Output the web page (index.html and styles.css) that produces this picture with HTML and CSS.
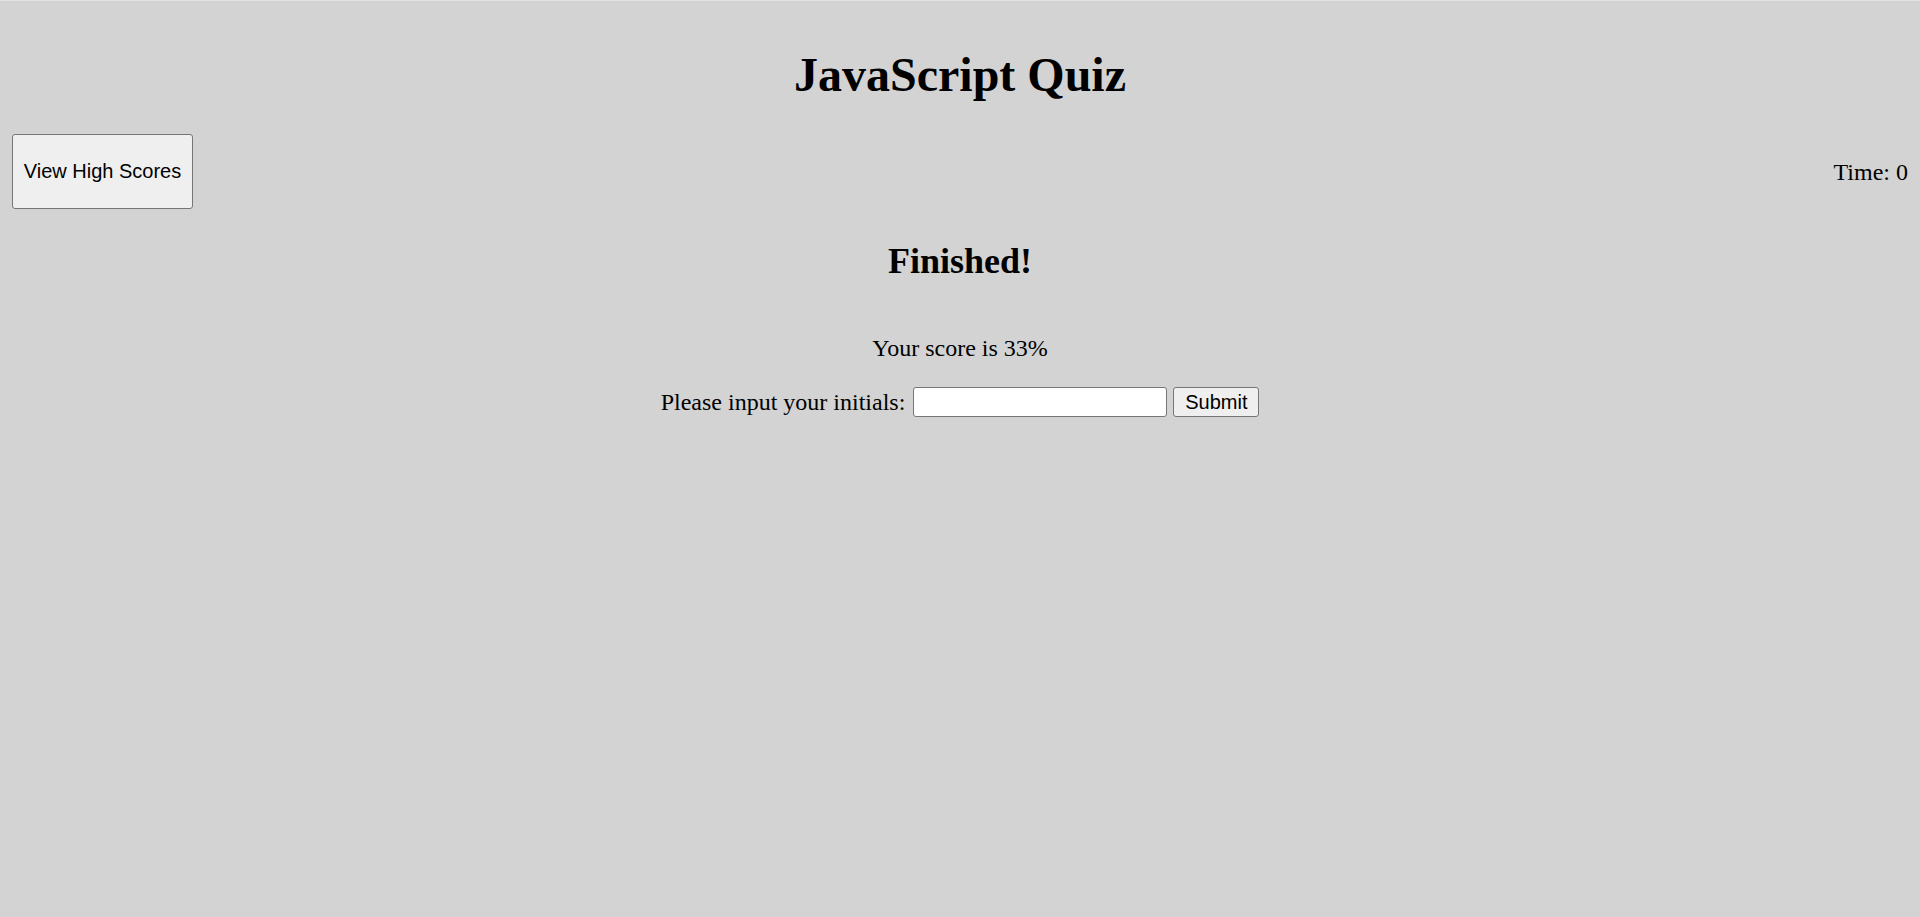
FILE: index.html
```html
<!DOCTYPE html>
<html lang="en">
<head>
<meta charset="utf-8">
<title>JavaScript Quiz</title>
<link rel="stylesheet" href="styles.css">
</head>
<body>
<header class="header">
  <h1 class="title">JavaScript Quiz</h1>
  <nav class="topbar">
    <button class="scores-btn" type="button">View High Scores</button>
    <span class="timer">Time: 0</span>
  </nav>
</header>
<main class="finish">
  <h2 class="finish-title">Finished!</h2>
  <p class="score">Your score is 33%</p>
  <form class="initials-form">
    <label class="initials-label" for="initials">Please input your initials:</label>
    <input class="initials-input" id="initials" type="text">
    <button class="submit-btn" type="button">Submit</button>
  </form>
</main>
</body>
</html>
```

FILE: styles.css
```css
html {
  background: #d3d3d3;
  border-top: 1px solid #e2e2e2;
}

body {
  margin: 0;
  padding: 0 12px 12px;
  font-family: "Liberation Serif", "Times New Roman", serif;
  font-size: 24px;
  color: #000;
  min-height: 904px;
}

.header {
  padding-top: 12px;
}

.title {
  margin: 34px 0 32px;
  font-size: 48px;
  font-weight: bold;
  text-align: center;
  line-height: 55px;
}

.topbar {
  display: flex;
  justify-content: space-between;
  align-items: center;
}

.scores-btn {
  font-family: "Liberation Sans", Arial, sans-serif;
  font-size: 20px;
  color: #000;
  background: #efefef;
  border: 1px solid #767676;
  border-radius: 3px;
  padding: 0 10px;
  height: 75px;
  width: 181px;
}

.timer {
  line-height: 28px;
}

.finish {
  text-align: center;
}

.finish-title {
  margin: 32px 0 0;
  font-size: 36px;
  line-height: 41px;
  font-weight: bold;
}

.score {
  margin: 52px 0 0;
  line-height: 28px;
}

.initials-form {
  margin-top: 25px;
  display: flex;
  justify-content: center;
  align-items: center;
  gap: 6px;
}

.initials-label {
  line-height: 28px;
  margin-right: 2px;
}

.initials-input {
  box-sizing: border-box;
  width: 254px;
  height: 30px;
  margin: 0;
  padding: 1px 3px;
  background: #fff;
  border: 1px solid #767676;
  border-radius: 3px;
  font-family: "Liberation Sans", Arial, sans-serif;
  font-size: 20px;
}

.submit-btn {
  box-sizing: border-box;
  height: 30px;
  width: 86px;
  margin: 0;
  padding: 0;
  font-family: "Liberation Sans", Arial, sans-serif;
  font-size: 20px;
  color: #000;
  background: #efefef;
  border: 1px solid #767676;
  border-radius: 3px;
}
```
